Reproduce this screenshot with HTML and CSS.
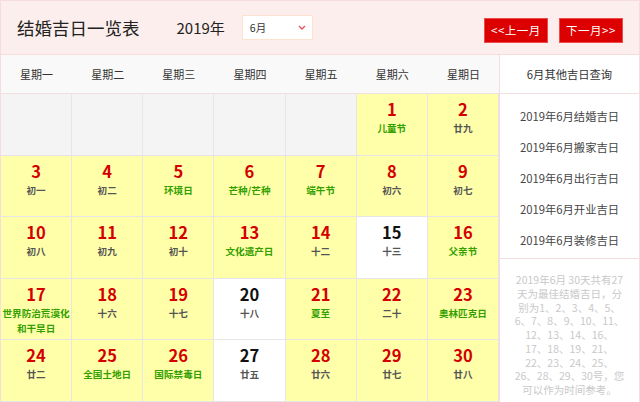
FILE: index.html
```html
<!DOCTYPE html>
<html lang="zh-CN">
<head>
<meta charset="utf-8">
<title>结婚吉日一览表</title>
<link rel="stylesheet" href="styles.css">
</head>
<body>
<div class="page">
  <header class="top">
    <h1 class="title">结婚吉日一览表</h1>
    <span class="year">2019年</span>
    <div class="select">
      <span>6月</span>
      <svg class="chev" width="8" height="5" viewBox="0 0 8 5"><polyline points="1,1 4,4 7,1" fill="none" stroke="#e8505b" stroke-width="1.3"/></svg>
    </div>
    <div class="navs">
      <a class="btn">&lt;&lt;上一月</a>
      <a class="btn">下一月&gt;&gt;</a>
    </div>
  </header>
  <div class="main">
    <div class="cal">
      <div class="week">
        <div>星期一</div><div>星期二</div><div>星期三</div><div>星期四</div><div>星期五</div><div>星期六</div><div>星期日</div>
      </div>
      <div class="grid">
        <div class="cell empty"></div>
        <div class="cell empty"></div>
        <div class="cell empty"></div>
        <div class="cell empty"></div>
        <div class="cell empty"></div>
        <div class="cell good"><div class="num">1</div><div class="sub fest">儿童节</div></div>
        <div class="cell good"><div class="num">2</div><div class="sub">廿九</div></div>

        <div class="cell good"><div class="num">3</div><div class="sub">初一</div></div>
        <div class="cell good"><div class="num">4</div><div class="sub">初二</div></div>
        <div class="cell good"><div class="num">5</div><div class="sub fest">环境日</div></div>
        <div class="cell good"><div class="num">6</div><div class="sub fest">芒种/芒种</div></div>
        <div class="cell good"><div class="num">7</div><div class="sub fest">端午节</div></div>
        <div class="cell good"><div class="num">8</div><div class="sub">初六</div></div>
        <div class="cell good"><div class="num">9</div><div class="sub">初七</div></div>

        <div class="cell good"><div class="num">10</div><div class="sub">初八</div></div>
        <div class="cell good"><div class="num">11</div><div class="sub">初九</div></div>
        <div class="cell good"><div class="num">12</div><div class="sub">初十</div></div>
        <div class="cell good"><div class="num">13</div><div class="sub fest">文化遗产日</div></div>
        <div class="cell good"><div class="num">14</div><div class="sub">十二</div></div>
        <div class="cell plain"><div class="num">15</div><div class="sub">十三</div></div>
        <div class="cell good"><div class="num">16</div><div class="sub fest">父亲节</div></div>

        <div class="cell good"><div class="num">17</div><div class="sub fest">世界防治荒漠化和干旱日</div></div>
        <div class="cell good"><div class="num">18</div><div class="sub">十六</div></div>
        <div class="cell good"><div class="num">19</div><div class="sub">十七</div></div>
        <div class="cell plain"><div class="num">20</div><div class="sub">十八</div></div>
        <div class="cell good"><div class="num">21</div><div class="sub fest">夏至</div></div>
        <div class="cell good"><div class="num">22</div><div class="sub">二十</div></div>
        <div class="cell good"><div class="num">23</div><div class="sub fest">奥林匹克日</div></div>

        <div class="cell good"><div class="num">24</div><div class="sub">廿二</div></div>
        <div class="cell good"><div class="num">25</div><div class="sub fest">全国土地日</div></div>
        <div class="cell good"><div class="num">26</div><div class="sub fest">国际禁毒日</div></div>
        <div class="cell plain"><div class="num">27</div><div class="sub">廿五</div></div>
        <div class="cell good"><div class="num">28</div><div class="sub">廿六</div></div>
        <div class="cell good"><div class="num">29</div><div class="sub">廿七</div></div>
        <div class="cell good"><div class="num">30</div><div class="sub">廿八</div></div>
      </div>
    </div>
    <aside class="side">
      <div class="side-head">6月其他吉日查询</div>
      <ul class="links">
        <li>2019年6月结婚吉日</li>
        <li>2019年6月搬家吉日</li>
        <li>2019年6月出行吉日</li>
        <li>2019年6月开业吉日</li>
        <li>2019年6月装修吉日</li>
      </ul>
      <p class="desc">2019年6月 30天共有27<br>天为最佳结婚吉日，分<br>别为1、2、3、4、5、<br>6、7、8、9、10、11、<br>12、13、14、16、<br>17、18、19、21、<br>22、23、24、25、<br>26、28、29、30号，您<br>可以作为时间参考。</p>
    </aside>
  </div>
</div>
</body>
</html>
```
FILE: styles.css
```css
* { box-sizing: border-box; }
html, body { margin: 0; padding: 0; background: #fff; }
body {
  font-family: "Noto Sans CJK SC", "Microsoft YaHei", "DejaVu Sans", sans-serif;
  color: #333;
}
.page {
  width: 640px;
  border: 1px solid #f6dcdc;
  border-bottom: none;
}
.top {
  height: 54px;
  background: #fbeeec;
  border-bottom: 1px solid #f6dcdc;
  display: flex;
  align-items: center;
  padding: 0 16px 0 16px;
}
.title {
  margin: 0;
  font-size: 17.5px;
  font-weight: normal;
  color: #222;
}
.year {
  margin-left: 37px;
  font-size: 15px;
  color: #222;
}
.select {
  margin-left: 17px;
  width: 71px;
  height: 25px;
  background: #fff;
  border: 1px solid #fde2cf;
  display: flex;
  align-items: center;
  justify-content: space-between;
  padding: 0 6px 0 7px;
  font-size: 10.5px;
  color: #333;
  margin-top: -1px;
}
.chev { display: block; }
.navs {
  margin-left: auto;
  display: flex;
  gap: 11px;
  margin-top: 5px;
}
.btn {
  width: 64px;
  height: 25px;
  background: #dd0000;
  border: 1px solid #ee4b4b;
  color: #fff;
  font-size: 11.5px;
  display: flex;
  align-items: center;
  justify-content: center;
  letter-spacing: 0.5px;
}
.main { display: flex; }
.cal { width: 498px; }
.week {
  height: 39px;
  background: #f9f9f9;
  border-bottom: 1px solid #f0e0e0;
  display: grid;
  grid-template-columns: repeat(7, 1fr);
  align-items: center;
  text-align: center;
  font-size: 11px;
  color: #333;
}
.grid {
  display: grid;
  grid-template-columns: repeat(7, 1fr);
  grid-auto-rows: 61.5px;
}
.cell {
  border-right: 1px solid #e6e6e6;
  border-bottom: 1px solid #e6e6e6;
  text-align: center;
  padding-top: 5px;
}
.empty { background: #f4f4f4; }
.good { background: #ffffaa; }
.plain { background: #fff; }
.num {
  font-size: 16.5px;
  font-weight: bold;
  line-height: 21px;
  color: #d40000;
}
.plain .num { color: #111; }
.sub {
  margin-top: 1px;
  font-size: 9.6px;
  font-weight: bold;
  line-height: 15px;
  color: #555;
}
.sub.fest { color: #33a000; }
.side {
  flex: 1;
  border-left: 1px solid #f6dcdc;
}
.side-head {
  height: 39px;
  border-bottom: 1px solid #f0e0e0;
  display: flex;
  align-items: center;
  justify-content: center;
  font-size: 11.3px;
  color: #333;
}
.links {
  list-style: none;
  margin: 0;
  padding: 7px 0 2px;
  border-bottom: 1px solid #f6dcdc;
}
.links li {
  height: 31px;
  line-height: 31px;
  text-align: center;
  font-size: 11.3px;
  color: #444;
}
.desc {
  margin: 0;
  padding: 14px 6px 0;
  text-align: center;
  font-size: 10.5px;
  line-height: 13.75px;
  color: #c9c9c9;
}
```
